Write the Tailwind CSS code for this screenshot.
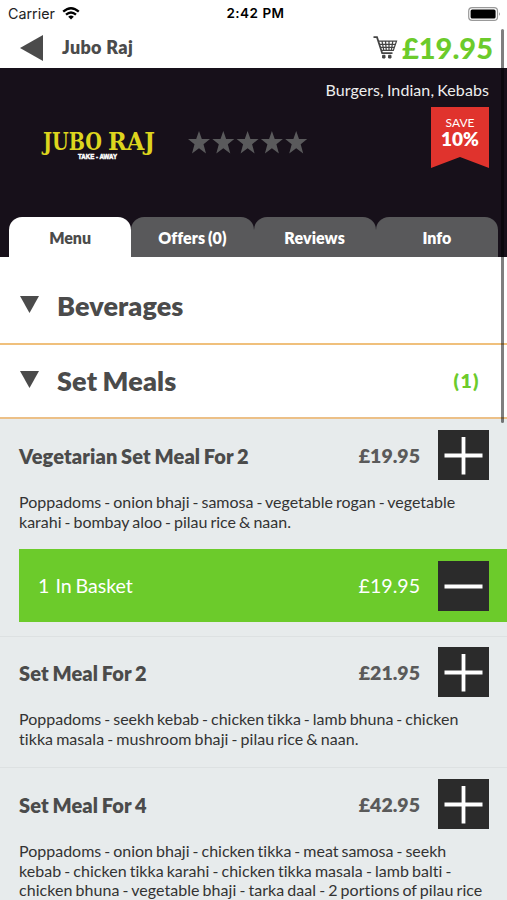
<!DOCTYPE html>
<html lang="en">
<head>
<meta charset="utf-8">
<title>Jubo Raj</title>
<script src="https://cdn.jsdelivr.net/npm/@tailwindcss/browser@4"></script>
</head>
<body class="relative h-[900px] w-[507px] overflow-hidden bg-white font-['Lato',sans-serif] text-[#4b4b4b] [font-variant-ligatures:none]">
<div class="grid h-7 grid-cols-3 items-center pl-[8px] pr-[6px] font-['Inter',sans-serif] text-[13.5px] leading-none text-black">
  <div class="flex items-center gap-[7px]"><span class="text-[14.3px] text-[#222]">Carrier</span>
    <svg class="h-[13px] w-[18px]" viewBox="0 0 18 13" fill="none" stroke="#000" stroke-width="2.3"><path d="M1.2 4.7Q9-2.2 16.8 4.7M4 7.7Q9 3.3 14 7.7"/><path d="M6.2 9.7Q9 7.4 11.8 9.7L9 12.5Z" fill="#000" stroke="none"/></svg>
  </div>
  <div class="pl-[2px] text-center font-semibold tracking-[0.5px]">2:42 PM</div>
  <svg class="h-[14px] w-[33px] justify-self-end" viewBox="0 0 33 14"><rect x=".7" y=".7" width="28.8" height="12.6" rx="3.4" fill="none" stroke="#999" stroke-width="1.2"/><rect x="2.6" y="2.5" width="25" height="9" rx="1.6"/><path d="M31 5q1.6 2 0 4z" fill="#777"/></svg>
</div>
<header class="flex h-10 items-center pl-5 pr-[14px]">
  <svg class="h-[26px] w-[23px]" viewBox="0 0 23 26"><path d="M0 13L23 0V26Z" fill="#4b4b4b"/></svg>
  <h1 class="relative -top-px ml-[19px] text-[18px] font-extrabold leading-6 tracking-[0.3px]">Jubo Raj</h1>
  <svg class="ml-auto h-[24px] w-[25px]" viewBox="0 0 25 24" fill="none" stroke="#444"><path d="M.5 1.2H4L9.2 17.2H19.5" stroke-width="1.8"/><path d="M5 5.2H23.5L20.3 14.4H8.6M6.2 8.3H22.4M7.4 11.4H21.2M9 5L10.8 14.5M12.5 5L13.3 14.5M16 5V14.5M19.8 5L18.4 14" stroke-width="1.25"/><path d="M9.6 19.3H12V22H9.6ZM15.6 19.3H18V22H15.6Z" fill="#444" stroke-width="1"/></svg>
  <span class="ml-[4px] text-[29px] font-black leading-8 text-[#6ccb2b]">£19.95</span>
</header>
<section class="flex h-[189px] flex-col bg-[#17101a]">
  <p class="h-[39px] pr-[18px] pt-[11px] text-right text-[16px] leading-[22px] text-[#eee] [word-spacing:-1px] tracking-[0.08px]">Burgers, Indian, Kebabs</p>
  <div class="flex h-[110px] items-start pl-[41px] pr-[18px]">
    <svg class="mt-[20px] h-[36px] w-[116px] overflow-visible" viewBox="0 0 116 36"><g font-family="DejaVu Serif, serif" font-size="24" font-weight="bold" fill="#ddd51e"><text x="2" y="23" textLength="59" lengthAdjust="spacingAndGlyphs">JUBO</text><text x="67" y="23" textLength="47" lengthAdjust="spacingAndGlyphs">RAJ</text></g><text x="37" y="32" textLength="39" lengthAdjust="spacingAndGlyphs" font-family="Liberation Sans, sans-serif" font-size="7.2" font-weight="bold" fill="#fff" stroke="#fff" stroke-width=".5">TAKE - AWAY</text></svg>
    <svg class="ml-[31px] mt-[24px] h-[23px] w-[120px]" viewBox="0 0 120 23" fill="#5a5a5c"><defs><path id="star" d="M11 0L13.8 8H22L15.5 13.2 18 22.5 11 17.3 4 22.5 6.5 13.2 0 8H8.2Z"/></defs><use href="#star"/><use href="#star" x="24.3"/><use href="#star" x="48.6"/><use href="#star" x="72.9"/><use href="#star" x="97.2"/></svg>
    <div class="ml-auto h-[61px] w-[58px] bg-[#e0332d] pt-[9px] text-center text-white [clip-path:polygon(0_0,100%_0,100%_100%,50%_82%,0_100%)]">
      <div class="text-[12px] leading-[14px]">SAVE</div><div class="text-[19px] font-extrabold leading-[17px]">10%</div>
    </div>
  </div>
  <nav class="grid h-10 grid-cols-4 pl-[9px] pr-[9px] text-center text-[16px] font-extrabold leading-[41px] text-white [word-spacing:-1px]">
    <a class="rounded-t-[13px] bg-white text-[#4b4b4b]">Menu</a><a class="h-10 rounded-t-[13px] bg-[#59595b] tracking-[0.1px]">Offers (0)</a><a class="h-10 rounded-t-[13px] bg-[#59595b] tracking-[0.1px]">Reviews</a><a class="h-10 rounded-t-[13px] bg-[#59595b]">Info</a>
  </nav>
</section>
<main>
  <div class="flex h-[88px] items-center border-b-2 border-[#f0c07c] pl-5 pt-[11px]">
    <svg class="mb-[2px] h-[17px] w-[19px]" viewBox="0 0 19 17"><path d="M0 0H19L9.5 17Z" fill="#4b4b4b"/></svg>
    <h2 class="ml-[18px] text-[27px] font-extrabold leading-8 tracking-[0.1px]">Beverages</h2>
  </div>
  <div class="flex h-[74px] items-center border-b-2 border-[#ecc087] pl-5 pr-[28px]">
    <svg class="mb-[4px] h-[17px] w-[19px]" viewBox="0 0 19 17"><path d="M0 0H19L9.5 17Z" fill="#4b4b4b"/></svg>
    <h2 class="ml-[18px] text-[27px] font-extrabold leading-8 tracking-[0.15px] [word-spacing:-1px]">Set Meals</h2>
    <span class="-mr-px ml-auto text-[19.5px] font-extrabold tracking-[1.4px] text-[#6ccb2b]">(1)</span>
  </div>
  <div class="h-[481px] overflow-hidden bg-[#e7ebec]">
    <article class="h-[218px] border-b border-[#dde1e2] pl-[19px] pt-[11px]">
      <div class="flex h-[50px] items-center pr-[18px] text-[19.5px] font-extrabold"><h3 class="pt-px text-[20px] tracking-[0.12px] [word-spacing:-1.1px]">Vegetarian Set Meal For 2</h3><span class="ml-auto pt-px text-[#5a5a5a]">£19.95</span>
        <svg class="ml-[18px] h-[50px] w-[51px] bg-[#2b2b2b]" viewBox="0 0 51 50"><path d="M6.5 25.5H44.5M25.5 7V44.5" stroke="#fff" stroke-width="3.8"/></svg></div>
      <p class="mt-[12px] text-[16px] leading-[19.6px] text-[#333] [word-spacing:-1.1px]">Poppadoms - onion bhaji - samosa - vegetable rogan - vegetable<br>karahi - bombay aloo - pilau rice &amp; naan.</p>
      <div class="mt-[18px] flex h-[73px] items-center bg-[#6ccb2b] pl-[19px] pr-[18px] text-[19.6px] text-white"><span class="pt-px">1</span><span class="ml-[6px] pt-px [word-spacing:-1.2px]">In Basket</span><span class="ml-auto pt-px">£19.95</span>
        <svg class="ml-[18px] h-[50px] w-[51px] bg-[#2b2b2b]" viewBox="0 0 51 50"><path d="M6.5 25.5H44.5" stroke="#fff" stroke-width="3.8"/></svg></div>
    </article>
    <article class="h-[131px] border-b border-[#dde1e2] pl-[19px] pt-[10px]">
      <div class="flex h-[50px] items-center pr-[18px] text-[19.5px] font-extrabold"><h3 class="pt-px text-[20px] tracking-[0.12px] [word-spacing:-1.1px]">Set Meal For 2</h3><span class="ml-auto pt-px text-[#5a5a5a]">£21.95</span>
        <svg class="ml-[18px] h-[50px] w-[51px] bg-[#2b2b2b]" viewBox="0 0 51 50"><path d="M6.5 25.5H44.5M25.5 7V44.5" stroke="#fff" stroke-width="3.8"/></svg></div>
      <p class="mt-[12px] text-[16px] leading-[19.6px] text-[#333] [word-spacing:-1.1px]">Poppadoms - seekh kebab - chicken tikka - lamb bhuna - chicken<br><span class="tracking-[0.06px]">tikka masala - mushroom bhaji - pilau rice &amp; naan.</span></p>
    </article>
    <article class="pl-[19px] pt-[11px]">
      <div class="flex h-[50px] items-center pr-[18px] text-[19.5px] font-extrabold"><h3 class="pt-px text-[20px] tracking-[0.12px] [word-spacing:-1.1px]">Set Meal For 4</h3><span class="ml-auto pt-px text-[#5a5a5a]">£42.95</span>
        <svg class="ml-[18px] h-[50px] w-[51px] bg-[#2b2b2b]" viewBox="0 0 51 50"><path d="M6.5 25.5H44.5M25.5 7V44.5" stroke="#fff" stroke-width="3.8"/></svg></div>
      <p class="mt-[12px] text-[16px] leading-[19.6px] text-[#333] [word-spacing:-1.1px]">Poppadoms - onion bhaji - chicken tikka - meat samosa - seekh<br><span class="tracking-[0.04px]">kebab - chicken tikka karahi - chicken tikka masala - lamb balti -</span><br><span class="tracking-[0.05px]">chicken bhuna - vegetable bhaji - tarka daal - 2 portions of pilau rice</span></p>
    </article>
  </div>
</main>
<div class="absolute left-[500.5px] top-[29px] h-[394px] w-[3px] rounded-full bg-black/50"></div>
</body>
</html>
